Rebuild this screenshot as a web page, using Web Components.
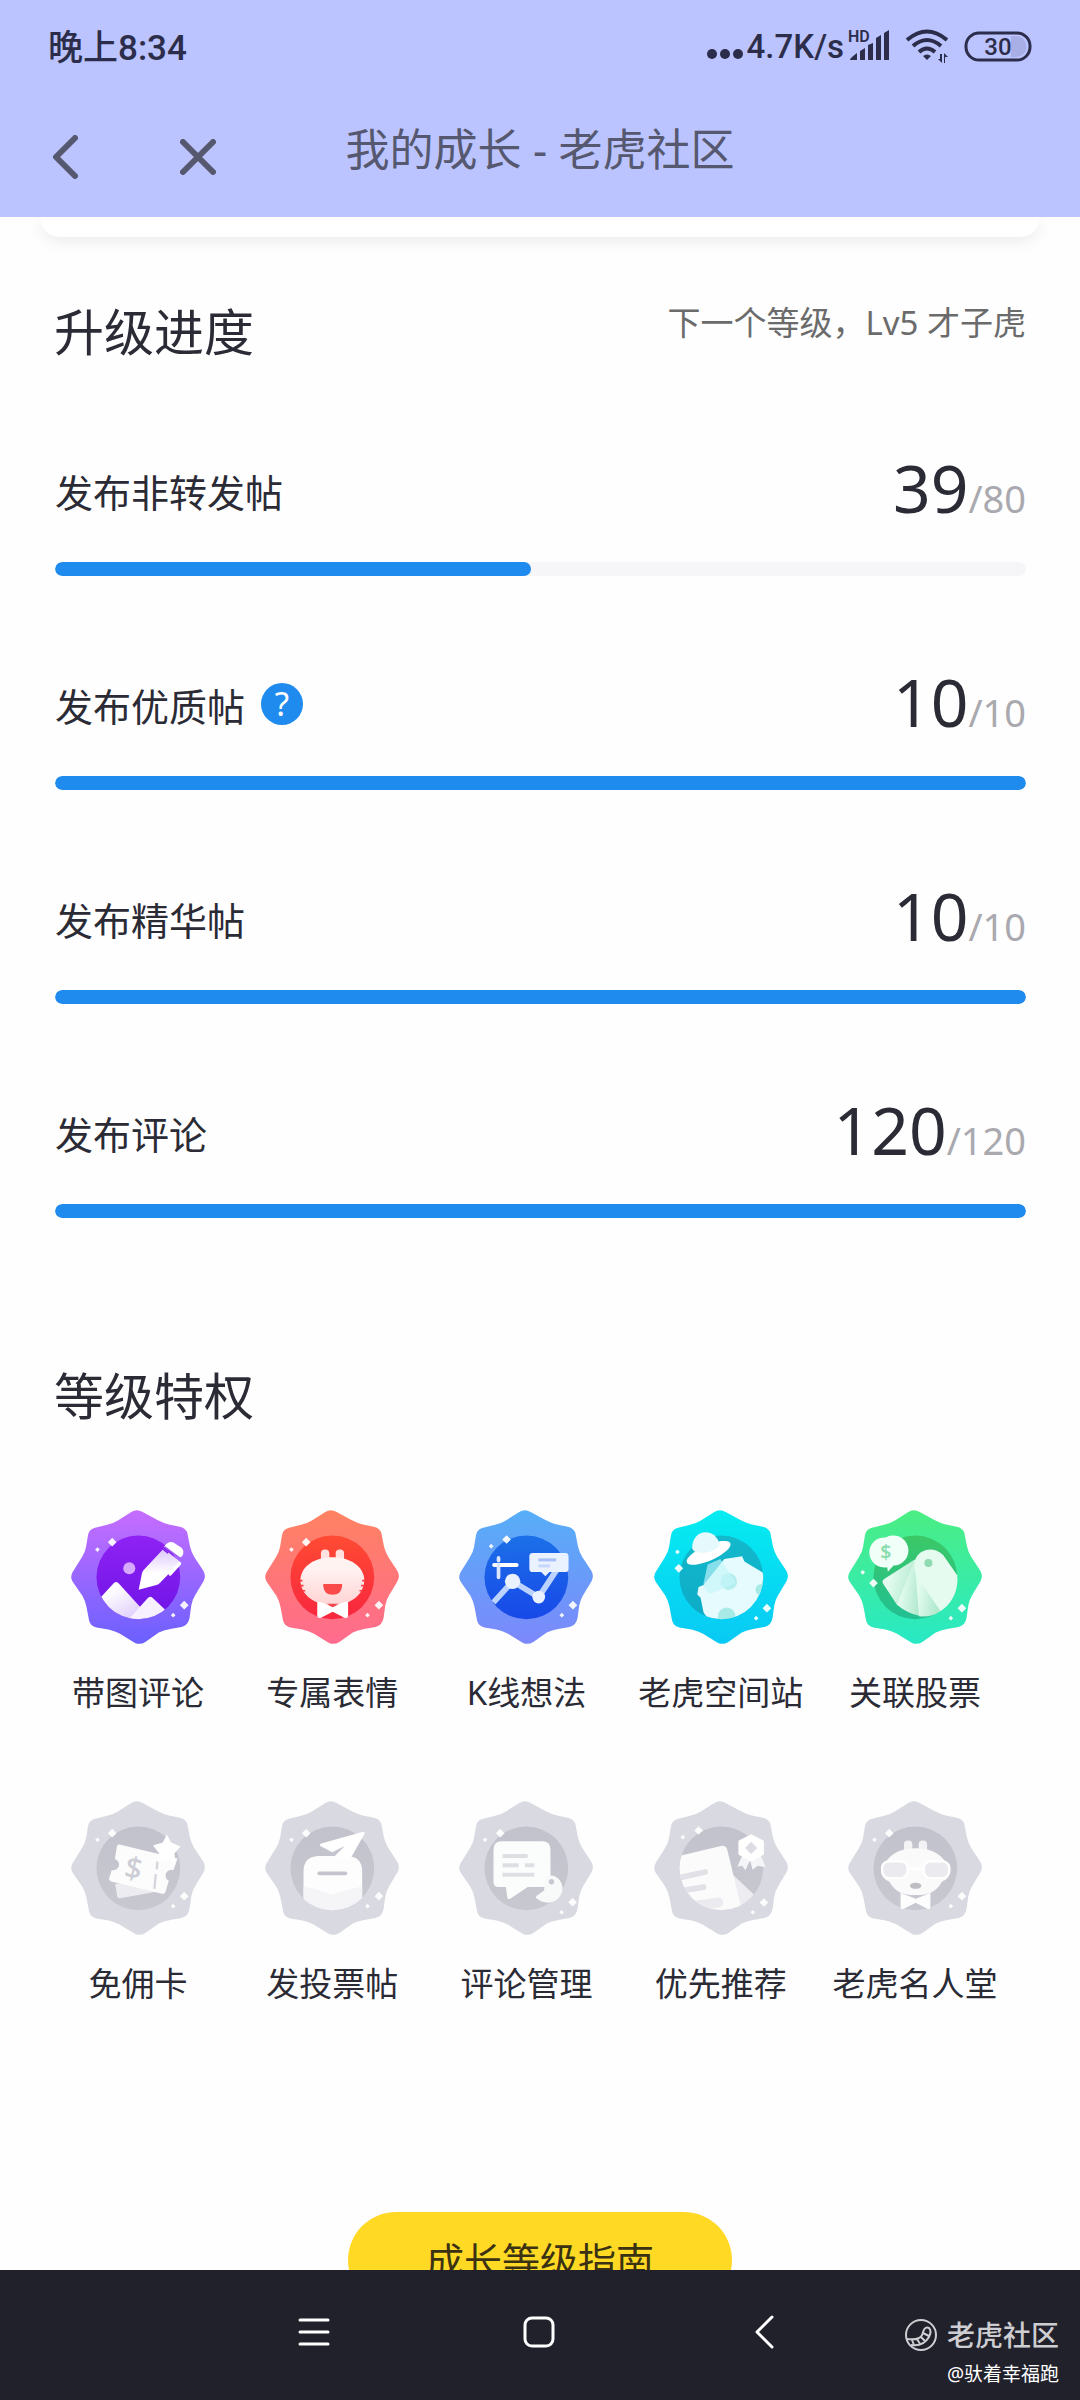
<!DOCTYPE html>
<html lang="zh-CN">
<head>
<meta charset="utf-8">
<meta name="viewport" content="width=device-width, initial-scale=1">
<title>我的成长 - 老虎社区</title>
<style>
  body {
    margin: 0;
    background: #fefefe;
    color: #2b2b36;
    font-family: "Noto Sans", "Noto Sans CJK SC", sans-serif;
  }
</style>
</head>
<body>
<growth-app></growth-app>

<script>
// shared pieces of the privilege badges, drawn on a 400 x 400 canvas
const BADGE_SHAPE = "M180 6Q196-4 214 6L258 30Q275 39 292 43L325 50Q345 55 348 72L355 108Q359 125 368 140L395 181Q404 196 396 212L370 255Q362 268 359 285L354 322Q350 345 330 349L296 355Q276 358 262 366L222 394Q206 404 190 396L145 369Q130 361 112 357L76 351Q58 347 54 330L46 288Q42 270 34 256L5 214Q-4 200 5 185L32 142Q42 128 45 110L51 74Q54 57 72 53L108 44Q125 40 140 31Z";

const LOCKED = { outer: ["#d9d9e2", "#d9d9e2"], inner: ["#c2c2cc", "#c8c8d1"], soft: "#ffffff" };

const ICONS = {
  picture: {
    outer: ["#c66dff", "#6b60ff"], inner: ["#8f22f4", "#6f14e6"], soft: "#dcc5fb",
    sparks: [[123, 96, 13], [79, 118, 7], [338, 284, 13], [305, 314, 7]],
    art: `
      <circle cx="174" cy="174" r="18" fill="#d7a8ff"/>
      <g clip-path="url(#disc)">
        <path d="M60 292L126 220Q134 210 142 219L214 298 176 345H80Z" fill="url(#soft)"/>
        <path d="M160 340L228 264Q236 255 244 263L300 316 250 345Z" fill="#f7f1ff"/>
      </g>
      <path d="M202 238L212 188Q214 182 219 177L277 115 326 155 266 217Q261 222 255 224Z" fill="url(#soft2)"/>
      <path d="M283 103Q293 93 306 97L330 113Q340 124 332 137L324 143 278 109Z" fill="#fff"/>
      <path d="M324 160L296 191" stroke="#fff" stroke-width="10" stroke-linecap="round"/>
      <path d="M275 117L290 129" stroke="#7a1cec" stroke-width="5"/>
      <path d="M280 110L326 144" stroke="#a05cf5" stroke-width="4"/>`
  },
  emoji: {
    outer: ["#ff8262", "#ff6b8e"], inner: ["#ff4b33", "#f7263f"], soft: "#ffd4d4",
    sparks: [[123, 96, 13], [79, 118, 7], [340, 284, 13], [306, 314, 7]],
    art: `
      <rect x="167" y="118" width="25" height="48" rx="12" fill="#ffe2e0"/>
      <rect x="211" y="118" width="25" height="48" rx="12" fill="#ffe2e0"/>
      <path d="M201 141C246 141 291 162 296 204C300 246 262 284 201 284C140 284 102 246 106 204C111 162 156 141 201 141Z" fill="url(#face)"/>
      <path d="M174 221H230V228Q227 253 202 253Q177 253 174 228Z" fill="#fa4a4a"/>
      <path d="M104 211H112M104 226H115M110 241H120M298 211H290M298 226H287M292 241H282" stroke="#fb3c40" stroke-width="5"/>
      <path d="M156 274Q165 271 202 290Q239 271 248 274V316Q247 325 237 322L202 304 167 322Q157 325 156 316Z" fill="#fff"/>
      <path d="M184 280H220L202 289Z" fill="#f14a50"/>`
  },
  kline: {
    outer: ["#57aef8", "#7c88fb"], inner: ["#1c70e8", "#1748e8"], soft: "#a9c8ff",
    sparks: [[142, 88, 13], [96, 108, 7], [340, 284, 13], [307, 314, 7]],
    art: `
      <path d="M103 276L160 213 238 260 292 178" fill="none" stroke="#bdd3ff" stroke-width="17"/>
      <circle cx="160" cy="213" r="23" fill="#eaf1ff"/><circle cx="238" cy="260" r="19" fill="#eaf1ff"/>
      <path d="M105 164H172" stroke="#fff" stroke-width="12" stroke-linecap="round"/>
      <path d="M118 143V151M118 164V201" stroke="#dbe7ff" stroke-width="11" stroke-linecap="round"/>
      <path d="M220 128H317Q327 128 327 138V175Q327 185 317 185H270L258 198 245 185H220Q210 185 210 175V138Q210 128 220 128Z" fill="#eaf2ff"/>
      <path d="M237 149H290" stroke="#a9bff5" stroke-width="9"/><path d="M237 167H272" stroke="#c7d7fb" stroke-width="9"/>`
  },
  space: {
    outer: ["#05ecf0", "#08c9f4"], inner: ["#14b9cb", "#0caac7"], soft: "#a5eff5",
    sparks: [[70, 125, 7], [74, 174, 13], [337, 293, 13], [305, 323, 7]],
    art: `
      <g clip-path="url(#disc)">
        <path d="M210 146L263 138 270 154 330 190V330H165L148 306 139 262 129 252 133 230 148 224Z" fill="#e6fbfd"/>
        <circle cx="223" cy="214" r="25" fill="#b4eeee"/><circle cx="217" cy="317" r="26" fill="#a7eae6"/><circle cx="320" cy="238" r="17" fill="#a7eae6"/>
      </g>
      <path d="M160 163L198 146 245 218 170 250Q146 240 148 218Z" fill="#c5f6fa" opacity=".65"/>
      <ellipse cx="163" cy="128" rx="71" ry="23" transform="rotate(-24 163 128)" fill="#fff"/>
      <path d="M114 115C112 56 184 48 196 104C188 128 122 138 114 115Z" fill="#e6f9fd"/>`
  },
  stock: {
    outer: ["#4cee83", "#28e9c5"], inner: ["#3bc866", "#22bf93"], soft: "#b2e9cf",
    sparks: [[44, 186, 7], [76, 218, 13], [340, 293, 13], [307, 323, 7]],
    art: `
      <path d="M199 148L108 206Q100 212 105 220L146 283 209 250Z" fill="url(#fan)"/>
      <path d="M199 148L146 283Q176 308 212 316L222 230Z" fill="url(#fan)"/>
      <path d="M199 148L212 317Q246 322 276 302L240 220Z" fill="url(#fan)"/>
      <path d="M276 302L205 196C176 135 240 94 284 134L326 195C331 242 308 282 276 302Z" fill="#e5fbef"/>
      <circle cx="240" cy="158" r="12" fill="#8fdab0"/>
      <path d="M113 82A45 45 0 1 1 136 166L119 184 117 171A45 45 0 1 1 113 82Z" fill="#f0fff7"/>
      <text x="113" y="147" font-size="58" font-weight="600" text-anchor="middle" fill="#8bdcaf">$</text>`
  },
  card: {
    ...LOCKED,
    sparks: [[123, 96, 13], [79, 116, 7], [338, 284, 13], [305, 314, 7]],
    art: `
      <path d="M132 248L138 285Q139 292 147 290L270 268 230 235Z" fill="#ececf1"/>
      <path d="M144 130L318 172 306 207A17 17 0 0 0 292 238L282 272Q280 279 272 277L120 240Q112 237 114 229L122 206A15 15 0 0 0 131 173L137 136Q139 129 144 130Z" fill="#fcfcfd"/>
      <path d="M258 180L256 204M253 218L249 262" stroke="#d5d5dd" stroke-width="7"/>
      <path d="M286 100L299 124 327 136 309 156 311 183 286 174 258 182 263 156 245 133 274 124Z" fill="#fff"/>
      <text x="187" y="233" font-size="90" font-weight="500" text-anchor="middle" fill="#cdcdd5" transform="rotate(12 187 200)">$</text>`
  },
  vote: {
    ...LOCKED,
    sparks: [[123, 96, 13], [79, 116, 7], [340, 284, 13], [306, 314, 7]],
    art: `
      <g clip-path="url(#disc)">
        <path d="M115 340V210Q115 166 159 164H246Q290 166 290 210V340Z" fill="#fdfdfd"/>
        <path d="M115 256Q158 262 202 280Q246 262 290 256V340H115Z" fill="#f5f5f8"/>
      </g>
      <path d="M162 216H240" stroke="#c4c4cc" stroke-width="11" stroke-linecap="round"/>
      <path d="M293 92Q300 92 296 100L254 174 207 166 238 134 201 153 165 134Q161 129 168 127Z" fill="#fff"/>`
  },
  comment: {
    ...LOCKED,
    sparks: [[123, 96, 13], [78, 116, 7], [339, 302, 13], [306, 332, 7]],
    art: `
      <path d="M128 120H248Q273 120 273 145V232Q273 257 248 257H205L153 292Q144 296 144 286L140 257H118Q103 257 103 240V145Q103 120 128 120Z" fill="#fbfcfc"/>
      <path d="M130 164H205M130 192H178M197 192H225M130 220H225" stroke="#dedfe2" stroke-width="12"/>
      <path d="M256 232C272 211 306 226 309 259C310 294 270 319 233 292Q226 286 234 281L254 267Z" fill="#f8f9f9"/>
      <circle cx="276" cy="241" r="8" fill="#c8c8d0"/>`
  },
  recommend: {
    ...LOCKED,
    sparks: [[133, 88, 13], [86, 108, 7], [328, 303, 13], [295, 332, 7]],
    art: `
      <g clip-path="url(#disc)">
        <path d="M236 220L305 286 250 330Z" fill="#ececf1"/>
        <path d="M60 168L200 134Q215 132 219 147L266 340H60Z" fill="#fbfbfc"/>
        <path d="M70 230L153 212M70 270L148 257" stroke="#e1e1e7" stroke-width="17" stroke-linecap="round"/>
        <path d="M90 318L192 303" stroke="#ebebef" stroke-width="30" stroke-linecap="round"/>
      </g>
      <path d="M262 166L249 196 263 193 273 207 287 176 294 205 310 193 333 198 320 164Z" fill="#f5f5f8"/>
      <path d="M290 99L328 119V160L290 181 252 160V119Z" fill="#fff"/>
      <path d="M290 122L308 140 290 158 272 140Z" fill="#dcdce2"/>`
  },
  hall: {
    ...LOCKED,
    sparks: [[123, 96, 13], [79, 116, 7], [340, 284, 13], [307, 314, 7]],
    art: `
      <rect x="167" y="118" width="25" height="48" rx="12" fill="#f3f3f5"/>
      <rect x="211" y="118" width="25" height="48" rx="12" fill="#f3f3f5"/>
      <path d="M202 141C248 141 275 158 290 180Q306 184 306 202Q305 232 281 240C262 276 230 281 202 281C174 281 142 276 123 240Q99 232 98 202Q98 184 114 180C129 158 156 141 202 141Z" fill="#fafafb"/>
      <rect x="102" y="180" width="76" height="50" rx="20" fill="#ebebef" stroke="#fff" stroke-width="7"/>
      <rect x="226" y="180" width="76" height="50" rx="20" fill="#ebebef" stroke="#fff" stroke-width="7"/>
      <path d="M179 202H225" stroke="#fff" stroke-width="7"/>
      <ellipse cx="202" cy="253" rx="17" ry="9" fill="#bdbdc3"/>
      <path d="M157 274Q168 278 202 292Q236 278 246 274V318Q245 325 237 322L202 304 167 322Q158 325 157 318Z" fill="#fdfdfd"/>
      <path d="M187 281H217L202 291Z" fill="#c6c6ce"/>`
  }
};

class StatusBar extends HTMLElement {
  connectedCallback() {
    this.attachShadow({ mode: "open" }).innerHTML = `
      <style>
        :host {
          display: flex;
          align-items: center;
          justify-content: space-between;
          height: 92px;
          padding: 0 48px;
          color: #2c2d4a;
          font-family: Roboto, "Noto Sans CJK SC", sans-serif;
          font-size: 33px;
          font-weight: 500;
        }
        .time { padding-bottom: 4px; font-size: 35px; }
        .right { display: flex; align-items: center; }
        .right > svg { display: block; flex: none; fill: currentColor; }
        .dots { margin-right: 4px; }
        .speed { margin-right: 3px; }
        .wifi { margin: 0 16px; }
      </style>
      <span class="time">晚上8:34</span>
      <div class="right">
        <svg class="dots" width="36" height="32" viewBox="0 0 36 32">
          <circle cx="5" cy="24" r="5"/><circle cx="18" cy="24" r="5"/><circle cx="31" cy="24" r="5"/>
        </svg>
        <span class="speed">4.7K/s</span>
        <svg width="43" height="38" viewBox="0 0 43 38">
          <text x="1" y="15" font-size="16" font-weight="600">HD</text>
          <path d="M3 33Q3 31 10 26V33ZM13 24L18 21V33H13ZM21 18L26 16V33H21ZM29 11L34 8V33H29ZM37 6L42 3V33H37Z"/>
        </svg>
        <svg class="wifi" width="42" height="34" viewBox="0 0 42 34">
          <g fill="none" stroke="currentColor" stroke-width="4">
            <path d="M1 11Q21-6 41 11"/><path d="M7 17Q21 5 35 17"/><path d="M13 23Q21 16 29 23"/>
          </g>
          <path d="M17 27Q21 24 25 27L21 31ZM34 25H36V34L32 30H34ZM38 24L42 28H39V34H38Z"/>
        </svg>
        <svg width="68" height="31" viewBox="0 0 68 31">
          <path d="M47 5H52A10 10 0 0 1 52 26H47Z" fill="#a8aee6"/>
          <rect x="2" y="2" width="64" height="27" rx="13" fill="none" stroke="currentColor" stroke-width="3"/>
          <text x="34" y="24" font-size="24" text-anchor="middle">30</text>
        </svg>
      </div>
    `;
  }
}

class TitleBar extends HTMLElement {
  connectedCallback() {
    this.attachShadow({ mode: "open" }).innerHTML = `
      <style>
        :host {
          display: grid;
          grid-template-columns: 1fr auto 1fr;
          height: 125px;
          color: #56586f;
        }
        .actions {
          display: flex;
          align-self: end;
          align-items: center;
          gap: 102px;
          height: 120px;
          padding-left: 52px;
        }
        button {
          border: none;
          padding: 0;
          color: inherit;
          background: none;
        }
        svg {
          display: block;
          fill: none;
          stroke: currentColor;
          stroke-width: 6;
          stroke-linecap: round;
          stroke-linejoin: round;
        }
        h1 {
          margin: 0;
          font-size: 44px;
          font-weight: 400;
          line-height: 114px;
        }
      </style>
      <div class="actions">
        <button aria-label="返回"><svg width="26" height="44" viewBox="0 0 26 44"><path d="M23 3L4 22 23 41"/></svg></button>
        <button aria-label="关闭"><svg width="36" height="36" viewBox="0 0 36 36"><path d="M3 3L33 33M33 3L3 33"/></svg></button>
      </div>
      <h1><slot></slot></h1>
    `;
  }
}

class PageSection extends HTMLElement {
  connectedCallback() {
    this.attachShadow({ mode: "open" }).innerHTML = `
      <style>
        :host { display: block; }
        header {
          display: flex;
          align-items: flex-start;
          justify-content: space-between;
          padding: 0 54px;
        }
        h2 {
          margin: 0;
          font-size: 50px;
          font-weight: 400;
          line-height: 64px;
        }
        .note {
          color: #6b6b6b;
          font-size: 33px;
          line-height: 46px;
        }
      </style>
      <header>
        <h2>${this.getAttribute("heading")}</h2>
        <span class="note"><slot name="note"></slot></span>
      </header>
      <slot></slot>
    `;
  }
}

class ProgressRow extends HTMLElement {
  connectedCallback() {
    const value = this.getAttribute("value");
    const max = this.getAttribute("max");
    const percent = Math.round(value / max * 100);
    const help = this.hasAttribute("help") ? `<button aria-label="说明">?</button>` : "";

    this.attachShadow({ mode: "open" }).innerHTML = `
      <style>
        :host { display: block; }
        .line {
          display: flex;
          align-items: center;
          justify-content: space-between;
          height: 90px;
        }
        .name {
          display: flex;
          align-items: center;
          gap: 16px;
          padding-top: 6px;
          font-size: 38px;
        }
        button {
          width: 42px;
          height: 42px;
          border: none;
          border-radius: 50%;
          padding: 0;
          color: #fff;
          background: #208bee;
          font: inherit;
          font-size: 33px;
          line-height: 42px;
        }
        .count { padding-top: 10px; font-size: 66px; line-height: 90px; }
        .count small { color: #a9a9af; font-size: 38px; }
        progress {
          display: block;
          appearance: none;
          width: 100%;
          height: 14px;
          margin-top: 30px;
          border: none;
          border-radius: 7px;
          overflow: hidden;
          background: #f6f6f9;
        }
        progress::-webkit-progress-bar { background: #f6f6f9; }
        progress::-webkit-progress-value { border-radius: 7px; background: #208bee; }
      </style>
      <div class="line">
        <div class="name"><label for="bar"><slot></slot></label>${help}</div>
        <div class="count">${value}<small>/${max}</small></div>
      </div>
      <progress id="bar" value="${percent}" max="100"></progress>
    `;
  }
}

class PrivilegeItem extends HTMLElement {
  connectedCallback() {
    const icon = ICONS[this.getAttribute("icon")];
    const sparks = icon.sparks.map(([x, y, r]) =>
      `<path d="M${x} ${y - r}L${x + r} ${y} ${x} ${y + r} ${x - r} ${y}Z"/>`).join("");

    this.attachShadow({ mode: "open" }).innerHTML = `
      <style>
        :host {
          display: flex;
          flex-direction: column;
          align-items: center;
          gap: 27px;
          font-size: 33px;
          line-height: 44px;
          white-space: nowrap;
        }
        svg { display: block; width: 134px; height: 134px; }
      </style>
      <svg viewBox="0 0 400 400" aria-hidden="true">
        <defs>
          <linearGradient id="outer" x2="0" y2="1"><stop stop-color="${icon.outer[0]}"/><stop offset="1" stop-color="${icon.outer[1]}"/></linearGradient>
          <linearGradient id="inner" x2="0" y2="1"><stop stop-color="${icon.inner[0]}"/><stop offset="1" stop-color="${icon.inner[1]}"/></linearGradient>
          <linearGradient id="soft" x2=".8" y2="1"><stop offset=".3" stop-color="#fff"/><stop offset="1" stop-color="${icon.soft}"/></linearGradient>
          <linearGradient id="soft2" x2="0" y2="1"><stop stop-color="${icon.soft}"/><stop offset=".6" stop-color="#fff"/></linearGradient>
          <linearGradient id="face" x2="0" y2="1"><stop offset=".2" stop-color="#fff3f2"/><stop offset="1" stop-color="${icon.soft}"/></linearGradient>
          <linearGradient id="fan" x2="1" y2=".3"><stop offset=".3" stop-color="#e2fbee"/><stop offset="1" stop-color="${icon.soft}"/></linearGradient>
          <clipPath id="disc"><circle cx="201" cy="201" r="125"/></clipPath>
        </defs>
        <path d="${BADGE_SHAPE}" fill="url(#outer)"/>
        <circle cx="201" cy="201" r="125" fill="url(#inner)"/>
        ${icon.art}
        <g fill="#fff" opacity=".92">${sparks}</g>
      </svg>
      <span><slot></slot></span>
    `;
  }
}

class SystemNav extends HTMLElement {
  connectedCallback() {
    this.attachShadow({ mode: "open" }).innerHTML = `
      <style>
        :host {
          position: relative;
          display: block;
          flex: none;
          background: #21212b;
        }
        nav {
          display: flex;
          height: 130px;
          padding: 0 204px 0 202px;
        }
        button {
          display: grid;
          flex: 1;
          place-items: center;
          border: none;
          padding: 0 0 6px;
          background: none;
        }
        nav svg { fill: none; stroke: #fff; stroke-width: 3; stroke-linecap: round; stroke-linejoin: round; }
        /* signature laid over the corner of the bar */
        .mark {
          position: absolute;
          right: 21px;
          bottom: 12px;
          display: flex;
          flex-direction: column;
          align-items: flex-end;
          color: #fff;
          font-size: 19px;
          line-height: 28px;
        }
        .brand {
          display: flex;
          align-items: center;
          gap: 10px;
          margin-bottom: 5px;
          color: #cdcdd2;
          font-size: 28px;
          font-weight: 500;
          line-height: 40px;
        }
        .brand svg { fill: none; stroke: currentColor; stroke-width: 2; }
      </style>
      <nav>
        <button aria-label="菜单"><svg width="32" height="32" viewBox="0 0 32 32"><path d="M2 4H30M2 16H30M2 28H30"/></svg></button>
        <button aria-label="主页"><svg width="32" height="32" viewBox="0 0 32 32"><rect x="2" y="2" width="28" height="28" rx="7"/></svg></button>
        <button aria-label="返回"><svg width="20" height="34" viewBox="0 0 20 34"><path d="M18 2L3 17 18 32"/></svg></button>
      </nav>
      <div class="mark">
        <div class="brand">
          <svg width="32" height="32" viewBox="0 0 32 32">
            <circle cx="16" cy="16" r="15"/>
            <path d="M2 20Q17 22 18 13Q20 7 24 9Q27 12 24 18Q18 28 6 26M7 21L9 26M12 20L15 25M16 18L20 22M18 14L24 17"/>
          </svg>
          <span>老虎社区</span>
        </div>
        <span>@驮着幸福跑</span>
      </div>
    `;
  }
}

class GrowthApp extends HTMLElement {
  connectedCallback() {
    this.attachShadow({ mode: "open" }).innerHTML = `
      <style>
        :host {
          display: flex;
          flex-direction: column;
          height: 100vh;
        }
        .top { flex: none; background: #bbc4ff; }
        main { flex: 1; min-height: 0; overflow: hidden; }
        .card {
          height: 20px;
          margin: 0 40px 63px;
          border-radius: 0 0 20px 20px;
          background: #fff;
          box-shadow: 0 4px 16px rgba(0, 0, 0, 0.08);
        }
        .rows {
          display: grid;
          gap: 80px;
          padding: 78px 54px 146px 55px;
        }
        .grid {
          display: grid;
          grid-template-columns: repeat(5, 1fr);
          row-gap: 86px;
          padding: 82px 68px 206px 41px;
        }
        .guide {
          display: block;
          height: 96px;
          margin: 0 auto;
          border: none;
          border-radius: 48px;
          padding: 0 78px 4px;
          color: #3b3213;
          background: #ffd924;
          font: inherit;
          font-size: 38px;
        }
      </style>
      <div class="top">
        <status-bar></status-bar>
        <title-bar>我的成长 - 老虎社区</title-bar>
      </div>
      <main>
        <div class="card"></div>
        <page-section heading="升级进度">
          <span slot="note">下一个等级，Lv5 才子虎</span>
          <div class="rows">
            <progress-row value="39" max="80">发布非转发帖</progress-row>
            <progress-row value="10" max="10" help>发布优质帖</progress-row>
            <progress-row value="10" max="10">发布精华帖</progress-row>
            <progress-row value="120" max="120">发布评论</progress-row>
          </div>
        </page-section>
        <page-section heading="等级特权">
          <div class="grid">
            <privilege-item icon="picture">带图评论</privilege-item>
            <privilege-item icon="emoji">专属表情</privilege-item>
            <privilege-item icon="kline">K线想法</privilege-item>
            <privilege-item icon="space">老虎空间站</privilege-item>
            <privilege-item icon="stock">关联股票</privilege-item>
            <privilege-item icon="card">免佣卡</privilege-item>
            <privilege-item icon="vote">发投票帖</privilege-item>
            <privilege-item icon="comment">评论管理</privilege-item>
            <privilege-item icon="recommend">优先推荐</privilege-item>
            <privilege-item icon="hall">老虎名人堂</privilege-item>
          </div>
        </page-section>
        <button class="guide">成长等级指南</button>
      </main>
      <system-nav></system-nav>
    `;
  }
}

customElements.define("status-bar", StatusBar);
customElements.define("title-bar", TitleBar);
customElements.define("page-section", PageSection);
customElements.define("progress-row", ProgressRow);
customElements.define("privilege-item", PrivilegeItem);
customElements.define("system-nav", SystemNav);
customElements.define("growth-app", GrowthApp);
</script>
</body>
</html>
